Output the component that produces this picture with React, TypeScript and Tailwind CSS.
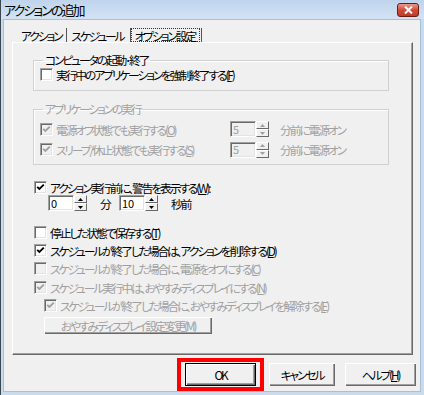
import React from "react";

const FONT = "font-['Noto_Sans_CJK_JP','Noto_Sans',sans-serif]";

function Check({ checked = false, disabled = false }: { checked?: boolean; disabled?: boolean }) {
  return (
    <span
      className={`w-[13px] h-[13px] shrink-0 flex items-center justify-center border border-t-[#a0a0a0] border-l-[#a0a0a0] border-r-[#ffffff] border-b-[#ffffff] shadow-[inset_1px_1px_0_#696969,inset_-1px_-1px_0_#e3e3e3] ${
        disabled ? "bg-[#f0f0f0]" : "bg-white"
      }`}
    >
      {checked && (
        <svg width="9" height="9" viewBox="0 0 9 9">
          <polyline
            points="1.2,3.8 3.4,6 7.8,1.6"
            fill="none"
            stroke={disabled ? "#a0a0a0" : "#000"}
            strokeWidth="1.9"
          />
        </svg>
      )}
    </span>
  );
}

function CheckRow({
  label,
  checked,
  disabled,
  className = "",
}: {
  label: React.ReactNode;
  checked?: boolean;
  disabled?: boolean;
  className?: string;
}) {
  return (
    <div className={`flex items-center ${className}`}>
      <Check checked={checked} disabled={disabled} />
      <span className={`ml-[3px] whitespace-nowrap ${disabled ? "text-[#a0a0a0]" : "text-black"}`}>{label}</span>
    </div>
  );
}

function U({ c }: { c: string }) {
  return <span className="underline underline-offset-[1px]">{c}</span>;
}

function Spin({ value, disabled = false, w = 26 }: { value: string; disabled?: boolean; w?: number }) {
  const arrowColor = disabled ? "#a0a0a0" : "#000";
  return (
    <div className="flex items-stretch h-[16px]">
      <div
        style={{ width: w }}
        className={`h-[16px] border border-t-[#a0a0a0] border-l-[#a0a0a0] border-r-[#ffffff] border-b-[#ffffff] shadow-[inset_1px_1px_0_#696969,inset_-1px_-1px_0_#e3e3e3] pl-[2px] flex items-center text-[11px] tracking-normal leading-none ${
          disabled ? "bg-[#f0f0f0] text-[#a0a0a0]" : "bg-white text-black"
        }`}
      >
        {value}
      </div>
      <div className="w-[13px] flex flex-col">
        {[0, 1].map((i) => (
          <div
            key={i}
            className="h-[8px] flex items-center justify-center bg-[#f0f0f0] border border-t-[#ffffff] border-l-[#ffffff] border-r-[#696969] border-b-[#696969]"
          >
            <svg width="5" height="3" viewBox="0 0 5 3">
              {i === 0 ? (
                <polygon points="2.5,0 5,3 0,3" fill={arrowColor} />
              ) : (
                <polygon points="0,0 5,0 2.5,3" fill={arrowColor} />
              )}
            </svg>
          </div>
        ))}
      </div>
    </div>
  );
}

function Button({
  children,
  w,
  h = 23,
  isDefault = false,
  disabled = false,
}: {
  children: React.ReactNode;
  w: number;
  h?: number;
  isDefault?: boolean;
  disabled?: boolean;
}) {
  return (
    <div
      style={{ width: w, height: h }}
      className={`flex items-center justify-center whitespace-nowrap bg-[#f0f0f0] ${
        isDefault
          ? "border border-black shadow-[inset_1px_1px_0_#ffffff,inset_-1px_-1px_0_#696969,inset_-2px_-2px_0_#a0a0a0]"
          : "shadow-[inset_1px_1px_0_#ffffff,inset_-1px_-1px_0_#696969,inset_-2px_-2px_0_#a0a0a0]"
      } ${disabled ? "text-[#a0a0a0]" : "text-black"}`}
    >
      {children}
    </div>
  );
}

function Group({ legend, children, className = "" }: { legend: string; children: React.ReactNode; className?: string }) {
  return (
    <fieldset className={`border border-[#d0d0d0] shadow-[inset_1px_1px_0_#fff] ${className}`}>
      <legend className="ml-[3px] px-[2px] leading-[12px]">{legend}</legend>
      {children}
    </fieldset>
  );
}

export default function App() {
  return (
    <div
      className={`${FONT} [font-feature-settings:"palt"] text-[11.75px] tracking-[-2.1px] leading-[13px] w-[424px] h-[395px] bg-[#c9dbee] border-l border-l-[#3a4650] flex flex-col`}
    >
      {/* title bar */}
      <div className="h-[20px] flex items-center bg-gradient-to-b from-[#bfd4ec] to-[#d3e3f4] pl-[3px] pr-[5px]">
        <span className="text-[13px] tracking-[-1.9px] leading-none text-black">アクションの追加</span>
        <div className="ml-auto mt-[1px] w-[22px] h-[14px] rounded-[3px] border border-[#6b1d14] bg-gradient-to-b from-[#e89a8c] via-[#cf4b38] to-[#c23a26] flex items-center justify-center">
          <svg width="9" height="8" viewBox="0 0 9 8">
            <path d="M1 0.5 L8 7.5 M8 0.5 L1 7.5" stroke="#fff" strokeWidth="2" />
          </svg>
        </div>
      </div>

      {/* client */}
      <div className="ml-[2px] mr-[3px] mb-[3px] flex-1 bg-[#f0f0f0] border border-[#a9bfd6] flex flex-col">
        {/* tabs */}
        <div className="ml-[13px] mt-[8px] h-[14px] flex items-end">
          <div className="h-[14px] pl-[4px] pr-[5px] flex items-center border-r border-r-[#555]">アクション</div>
          <div className="h-[14px] pl-[4px] pr-[6px] flex items-center border-r border-r-[#555]">スケジュール</div>
          <div className="h-[14px] border-r border-r-[#555] pr-[1px] flex items-center">
            <span className="h-[14px] pl-[3px] pr-[4px] flex items-center border border-dotted border-[#333]">オプション設定</span>
          </div>
        </div>

        {/* tab panel */}
        <div className="ml-[8px] w-[401px] h-[313px] border-t border-l border-t-white border-l-white border-r border-b border-r-[#696969] border-b-[#696969] shadow-[inset_-1px_-1px_0_#a0a0a0] flex flex-col">
          <div className="ml-[20px] w-[356px] mt-[11px]">
            <Group legend="コンピュータの起動･終了" className="h-[37px] pl-[6px]">
              <CheckRow
                className="h-[15px] mt-[1px]"
                label={
                  <>
                    実行中のアプリケーションを強制終了する(<U c="F" />)
                  </>
                }
              />
            </Group>

            <Group legend="アプリケーションの実行" className="mt-[12px] h-[62px] pl-[6px] text-[#a0a0a0]">
              <div className="flex items-center h-[20px] mt-[4px]">
                <CheckRow
                  className="w-[190px]"
                  checked
                  disabled
                  label={
                    <>
                      電源オフ状態でも実行する(<U c="O" />)
                    </>
                  }
                />
                <Spin value="5" disabled />
                <span className="ml-[11px] text-[#a0a0a0]">分前に電源オン</span>
              </div>
              <div className="flex items-center h-[21px]">
                <CheckRow
                  className="w-[190px]"
                  checked
                  disabled
                  label={
                    <>
                      スリープ/休止状態でも実行する(<U c="S" />)
                    </>
                  }
                />
                <Spin value="5" disabled />
                <span className="ml-[11px] text-[#a0a0a0]">分前に電源オン</span>
              </div>
            </Group>
          </div>

          <div className="ml-[21px] mt-[14px]">
            <CheckRow
              className="h-[16px]"
              checked
              label={
                <>
                  アクション実行前に、警告を表示する(<U c="W" />):
                </>
              }
            />
            <div className="ml-[14px] flex items-center h-[16px]">
              <Spin value="0" />
              <span className="ml-[13px] w-[19px]">分</span>
              <Spin value="10" />
              <span className="ml-[13px]">秒前</span>
            </div>

            <CheckRow
              className="h-[18px] mt-[12px]"
              label={
                <>
                  停止した状態で保存する(<U c="T" />)
                </>
              }
            />
            <CheckRow
              className="h-[18px]"
              checked
              label={
                <>
                  スケジュールが終了した場合は、アクションを削除する(<U c="D" />)
                </>
              }
            />
            <CheckRow
              className="h-[19px]"
              disabled
              label={
                <>
                  スケジュールが終了した場合に、電源をオフにする(<U c="C" />)
                </>
              }
            />
            <CheckRow
              className="h-[18px]"
              checked
              disabled
              label={
                <>
                  スケジュール実行中は、おやすみディスプレイにする(<U c="N" />)
                </>
              }
            />
            <div className="ml-[10px]">
              <CheckRow
                className="h-[18px]"
                checked
                disabled
                label={
                  <>
                    スケジュールが終了した場合に、おやすみディスプレイを解除する(<U c="E" />)
                  </>
                }
              />
              <div className="mt-[3px]">
                <Button w={168} h={17} disabled>
                  おやすみディスプレイ設定変更(<U c="M" />)
                </Button>
              </div>
            </div>
          </div>
        </div>

        {/* buttons */}
        <div className="flex items-center mt-[3px] ml-[173px]">
          <div className="border-[4px] border-[#ff0000] px-[4px] py-[1px]">
            <Button w={71} isDefault>
              OK
            </Button>
          </div>
          <div className="ml-[5px]">
            <Button w={66}>キャンセル</Button>
          </div>
          <div className="ml-[10px]">
            <Button w={71}>
              ヘルプ(<U c="H" />)
            </Button>
          </div>
        </div>
      </div>
    </div>
  );
}
